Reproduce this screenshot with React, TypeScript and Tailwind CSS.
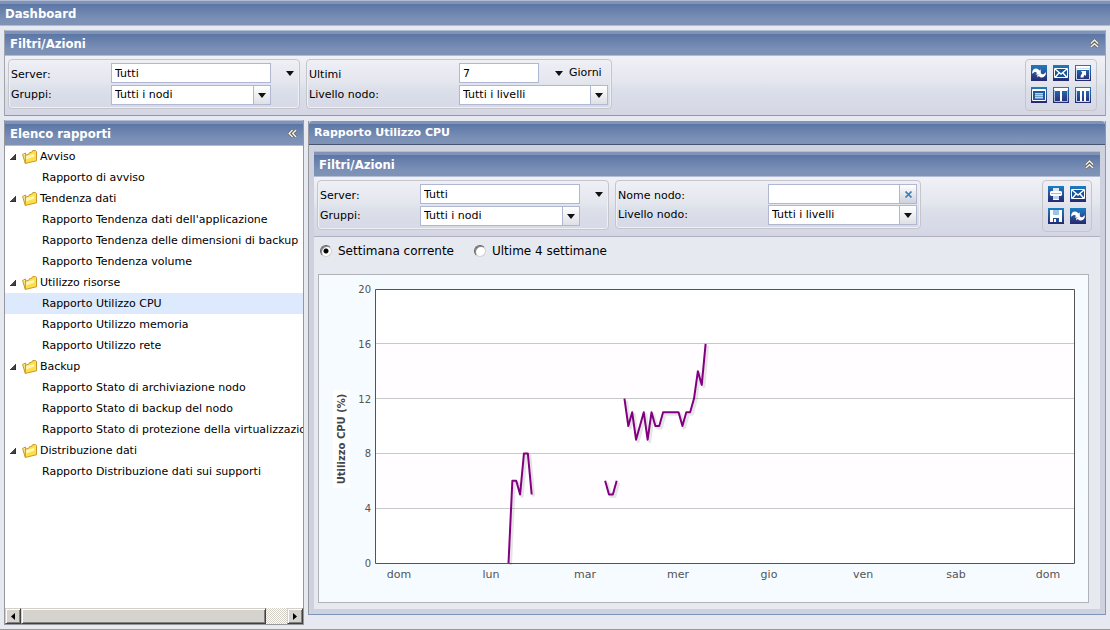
import { useState } from 'react';
import type { ReactNode } from 'react';

const tree = [
  { name: 'Avviso', items: ['Rapporto di avviso'] },
  {
    name: 'Tendenza dati',
    items: [
      "Rapporto Tendenza dati dell'applicazione",
      'Rapporto Tendenza delle dimensioni di backup',
      'Rapporto Tendenza volume',
    ],
  },
  {
    name: 'Utilizzo risorse',
    items: [
      'Rapporto Utilizzo CPU',
      'Rapporto Utilizzo memoria',
      'Rapporto Utilizzo rete',
    ],
  },
  {
    name: 'Backup',
    items: [
      'Rapporto Stato di archiviazione nodo',
      'Rapporto Stato di backup del nodo',
      'Rapporto Stato di protezione della virtualizzazione',
    ],
  },
  {
    name: 'Distribuzione dati',
    items: ['Rapporto Distribuzione dati sui supporti'],
  },
];

// hourly CPU samples, each run starts at the given hour
const runs = [
  { start: 0, values: [0, 6, 6, 5, 8, 8, 5] },
  { start: 25, values: [6, 5, 5, 6] },
  {
    start: 30,
    values: [
      12, 10, 11, 9, 10, 11, 9, 11, 10, 10, 11, 11, 11, 11, 11, 10, 11, 11, 12,
      14, 13, 16,
    ],
  },
];

const days = [
  { x: 80, label: 'dom' },
  { x: 172, label: 'lun' },
  { x: 266, label: 'mar' },
  { x: 359, label: 'mer' },
  { x: 450, label: 'gio' },
  { x: 544, label: 'ven' },
  { x: 637, label: 'sab' },
  { x: 729, label: 'dom' },
];

const yOf = (v: number) => 289 - v * 13.7;

function Chevrons({ className }: { className?: string }) {
  return (
    <svg
      viewBox="0 0 10 10"
      className={`size-[9px] ${className ?? ''}`}
      fill="none"
      aria-hidden="true"
    >
      <path d="M1 5 5 1.2 9 5M1 9 5 5.2 9 9" stroke="#5c5f66" strokeWidth="3" />
      <path d="M1 5 5 1.2 9 5M1 9 5 5.2 9 9" stroke="#f6f3e6" strokeWidth="1.6" />
    </svg>
  );
}

function PanelHeader({
  title,
  children,
}: {
  title: string;
  children?: ReactNode;
}) {
  return (
    <div className="flex h-[26px] shrink-0 items-center justify-between border-y border-[#b0bdd5] bg-[linear-gradient(#8193b7_0,#8193b7_3px,#5b76a5_3px,#7b90b7_75%,#8093b6)] pt-px pr-[6px] pl-[5px]">
      <h2 className="font-['DejaVu_Sans_Condensed','DejaVu_Sans',sans-serif] text-[13px] font-bold text-white">
        {title}
      </h2>
      {children}
    </div>
  );
}

function CollapseButton({ left }: { left?: boolean }) {
  return (
    <button
      type="button"
      aria-label={left ? 'Comprimi elenco' : 'Comprimi filtri'}
      className="flex size-[10px] items-center justify-center"
    >
      <Chevrons className={left ? '-rotate-90' : ''} />
    </button>
  );
}

function Caret() {
  return (
    <svg viewBox="0 0 8 5" className="h-[5px] w-2" aria-hidden="true">
      <path d="M0 0h8L4 5z" fill="#111" />
    </svg>
  );
}

function SelectBox({ id, value }: { id: string; value: string }) {
  return (
    <div className="relative">
      <select
        id={id}
        className="block h-5 w-full appearance-none border border-[#b0b7d3] bg-white pr-5 pl-[3px]"
      >
        <option>{value}</option>
      </select>
      <span className="pointer-events-none absolute inset-y-px right-px flex w-[17px] items-center justify-center border-l border-[#b0b7d3] bg-linear-to-b from-white to-[#dfe0e6]">
        <Caret />
      </span>
    </div>
  );
}

function TextBox({ id, value }: { id: string; value?: string }) {
  return (
    <input
      id={id}
      type="text"
      defaultValue={value}
      className="block h-5 w-full min-w-0 border border-[#b0b7d3] bg-white px-[3px]"
    />
  );
}

function MenuCaret({ label }: { label: string }) {
  return (
    <button
      type="button"
      aria-label={label}
      className="flex h-5 w-2 items-center justify-center"
    >
      <Caret />
    </button>
  );
}

function Group({ children }: { children: ReactNode }) {
  return (
    <div className="rounded border border-[#c6c5ca] p-[3px] pl-[2px] shadow-[inset_0_0_0_1px_#eff0f4]">
      {children}
    </div>
  );
}

function ServerGroup({ prefix }: { prefix: string }) {
  return (
    <Group>
      <div className="grid grid-cols-[100px_160px_25px] gap-y-[2px]">
        <label htmlFor={`${prefix}-server`} className="pt-1">
          Server:
        </label>
        <TextBox id={`${prefix}-server`} value="Tutti" />
        <div className="flex justify-end pr-[2px]">
          <MenuCaret label="Scegli server" />
        </div>
        <label htmlFor={`${prefix}-groups`} className="pt-[2px]">
          Gruppi:
        </label>
        <SelectBox id={`${prefix}-groups`} value="Tutti i nodi" />
      </div>
    </Group>
  );
}

const iconShapes = {
  refresh: (
    <>
      <path
        d="M1 8.800C1 5.500 2.600 3.600 5 3.600c1.600 0 2.600.8 3.300 1.900L9.600 4.300 10 9.800 4.600 9.400 6 8C5.200 7 4.200 6.800 3.300 7.300 2.600 7.700 2.200 8.200 1 8.800z"
        fill="#fff"
      />
      <path
        d="M15 7.200c0 3.300-1.600 5.200-4 5.200-1.600 0-2.600-.6-3.300-1.500L6.500 12.500 6.200 10.300 10.400 8.200 10 8.600c.8.800 1.800.9 2.700.4.700-.4 1.100-1.200 2.300-1.800z"
        fill="#fff"
      />
    </>
  ),
  mail: (
    <>
      <path d="M1.500 3.500h13v9h-13z" fill="#17539a" stroke="#fff" />
      <path
        d="M2 4l6 5 6-5M2 12.500l4-4.500M14 12.500 10 8"
        fill="none"
        stroke="#fff"
        strokeWidth="1.400"
      />
    </>
  ),
  popup: (
    <>
      <path d="M1 1h14v4H1z" fill="#fff" />
      <path d="M1.500 3.500h13v11h-13z" fill="none" stroke="#c8daef" />
      <path
        d="M6 6h5v5L9.700 9.800C8.700 11 8.600 11.500 8.500 12.500H5.500C5.500 10.800 6 9.600 7.300 7.900z"
        fill="#fff"
      />
    </>
  ),
  list: (
    <>
      <path d="M1.500 2.500h13v11h-13z" fill="#1d5ca2" stroke="#fff" />
      <path d="M2 2h12v2H2z" fill="#fff" />
      <path d="M4 6h8v6H4z" fill="#6f9bcd" />
      <path d="M4 6.500h8M4 8.500h8M4 10.500h8" stroke="#bcd3ec" />
    </>
  ),
  twoColumns: (
    <>
      <path d="M1 1h14v3H1z" fill="#fff" />
      <path d="M1.500 3v11.500h13V3" fill="none" stroke="#9fc0e2" />
      <path d="M7 4h2v10H7z" fill="#fff" />
    </>
  ),
  threeColumns: (
    <>
      <path d="M1 1h14v3H1z" fill="#fff" />
      <path d="M1.500 3v11.500h13V3" fill="none" stroke="#c8daef" />
      <path d="M5 4h2v10H5zM9 4h2v10H9z" fill="#fff" />
    </>
  ),
  print: (
    <>
      <path d="M5 2h6v3H5z" fill="#dce8f6" />
      <path d="M3 5h10l1 1v3l-1 1H3L2 9V6z" fill="#fff" />
      <path d="M3 7h10v1H3z" fill="#9dbbe0" />
      <path d="M5 9h6v5H5z" fill="#bcd3ec" />
      <path d="M5 9h6v1H5zM5 13h6v1H5z" fill="#fff" />
    </>
  ),
  save: (
    <>
      <path d="M2 2h12v12H2z" fill="#fff" />
      <path d="M5 2h6v5H5z" fill="#9cc4e6" />
      <path d="M5 10h6v4H5z" fill="#1b4f97" />
      <path d="M6 11h2v3H6z" fill="#fff" />
    </>
  ),
};

type IconName = keyof typeof iconShapes;

function IconButton({ icon, label }: { icon: IconName; label: string }) {
  return (
    <button
      type="button"
      aria-label={label}
      title={label}
      className="size-4 bg-linear-to-b from-[#1a7dc0] to-[#26286f]"
    >
      <svg viewBox="0 0 16 16" className="size-4" aria-hidden="true">
        {iconShapes[icon]}
      </svg>
    </button>
  );
}

function Folder() {
  return (
    <svg viewBox="0 0 15 14" className="h-[14px] w-[15px]" aria-hidden="true">
      <path
        d="M.6 4.500 3.500 3l1 9.500-1.200.9z"
        fill="#fdf0a0"
        stroke="#c8982a"
      />
      <path
        d="M3.300 13.400V5.200l3.200-.8 1-1.700 2.300-.5.800-1.500 3-.2.900 1v9.300z"
        fill="#fbe04a"
        stroke="#c8982a"
      />
      <path d="M4.200 6l8-2v2.500l-8 3z" fill="#fff7b8" />
    </svg>
  );
}

function ReportTree() {
  const [selected, setSelected] = useState('Rapporto Utilizzo CPU');

  return (
    <ul className="min-h-0 flex-1 overflow-hidden">
      {tree.map((group) => (
        <li key={group.name}>
          <button
            type="button"
            className="flex h-[21px] w-full items-center pl-[5px]"
          >
            <svg viewBox="0 0 6 6" className="size-[6px]" aria-hidden="true">
              <path d="M6 0v6H0z" fill="#444" stroke="#111" strokeWidth=".6" />
            </svg>
            <span className="mr-[3px] ml-[6px]">
              <Folder />
            </span>
            {group.name}
          </button>
          <ul>
            {group.items.map((item) => (
              <li key={item}>
                <a
                  href="#"
                  onClick={() => setSelected(item)}
                  className={`block h-[21px] overflow-hidden pl-[37px] leading-[21px] whitespace-nowrap ${
                    item === selected ? 'bg-[#dde9fc]' : ''
                  }`}
                >
                  {item}
                </a>
              </li>
            ))}
          </ul>
        </li>
      ))}
    </ul>
  );
}

const bevel =
  'border border-t-[#d4d0c8] border-r-[#404040] border-b-[#404040] border-l-[#d4d0c8] bg-[#d6d3ce] shadow-[inset_1px_1px_#fff,inset_-1px_-1px_#808080]';

function ScrollBar() {
  return (
    <div className="flex h-4 shrink-0 bg-[repeating-conic-gradient(#d4d0c8_0_25%,#fff_0_50%)] bg-[length:2px_2px]">
      <button
        type="button"
        aria-label="Scorri a sinistra"
        className={`flex w-4 items-center justify-center ${bevel}`}
      >
        <svg viewBox="0 0 4 7" className="h-[7px] w-1" aria-hidden="true">
          <path d="M4 0v7L0 3.500z" />
        </svg>
      </button>
      <div className="flex-1 pr-[21px]">
        <div className={`h-4 ${bevel}`} />
      </div>
      <button
        type="button"
        aria-label="Scorri a destra"
        className={`flex w-4 items-center justify-center ${bevel}`}
      >
        <svg viewBox="0 0 4 7" className="h-[7px] w-1" aria-hidden="true">
          <path d="M0 0v7l4-3.500z" />
        </svg>
      </button>
    </div>
  );
}

function CpuChart() {
  return (
    <svg
      viewBox="0 0 769 327"
      className="block w-full font-['DejaVu_Sans',sans-serif]"
      role="img"
      aria-label="Utilizzo CPU (%)"
    >
      <path d="M14 115h17v98H14z" fill="#fff" />
      <path d="M56.500 14.500h699v274h-699z" fill="#fff" />
      <path d="M57 69h698v54H57zM57 179h698v54H57z" fill="#fffdff" />
      {[4, 8, 12, 16].map((v) => (
        <path
          key={v}
          d={`M57 ${Math.floor(yOf(v)) - 0.5}h698`}
          stroke="#c8c8c8"
        />
      ))}
      <path d="M56.500 14.500h699v274h-699z" fill="none" stroke="#545454" />

      {[0, 4, 8, 12, 16, 20].map((v) => (
        <text
          key={v}
          x="52"
          y={yOf(v) + 3}
          textAnchor="end"
          fontSize="10"
          fill="#545454"
        >
          {v}
        </text>
      ))}
      {days.map((day) => (
        <text
          key={day.x}
          x={day.x}
          y="303"
          textAnchor="middle"
          fontSize="11"
          fill="#545454"
        >
          {day.label}
        </text>
      ))}
      <text
        transform="translate(26 164) rotate(-90)"
        textAnchor="middle"
        fontSize="10"
        fontWeight="bold"
        fill="#454545"
      >
        Utilizzo CPU (%)
      </text>

      {runs.map((run) => {
        const points = run.values
          .map((v, i) => `${189.5 + (run.start + i) * 3.865},${yOf(v) - 1}`)
          .join(' ');
        return (
          <g key={run.start} fill="none" strokeLinejoin="round">
            <polyline
              points={points}
              transform="translate(2 2)"
              stroke="#000"
              strokeOpacity=".1"
              strokeWidth="3"
            />
            <polyline points={points} stroke="#800080" strokeWidth="2" />
          </g>
        );
      })}
    </svg>
  );
}

function PeriodRadio({ label, checked }: { label: string; checked?: boolean }) {
  return (
    <label className="flex items-center gap-[6px]">
      <input
        type="radio"
        name="period"
        defaultChecked={checked}
        className="size-3 appearance-none rounded-full border border-t-[#606060] border-r-[#d4d0c8] border-b-[#d4d0c8] border-l-[#606060] bg-white shadow-[inset_1px_1px_#808080] checked:bg-[radial-gradient(circle,#000_2px,#fff_3px)]"
      />
      {label}
    </label>
  );
}

const filterBody =
  'flex items-start border-b bg-[linear-gradient(#f1f1f7,#e4e6ee_45%,#dbe0ea_55%,#d5d6e5)] px-[3px] pt-[3px] pb-1';

export default function App() {
  return (
    <div className="flex min-h-screen flex-col border-b border-[#999] bg-[#e6e9ef] font-['DejaVu_Sans',sans-serif] text-[11px] leading-[16px] text-black">
      <PanelHeader title="Dashboard" />

      <div className="flex flex-1 flex-col gap-1 px-1 pt-1 pb-[4px]">
        <section className="border-x border-[#a3a5ae]">
          <PanelHeader title="Filtri/Azioni">
            <CollapseButton />
          </PanelHeader>
          <div className={`${filterBody} gap-[6px] border-[#96969c]`}>
            <ServerGroup prefix="main" />
            <Group>
              <div className="grid grid-cols-[150px_80px_69px] gap-y-[2px]">
                <label htmlFor="last" className="pt-1">
                  Ultimi
                </label>
                <TextBox id="last" value="7" />
                <div className="flex items-center gap-[6px] pl-4">
                  <MenuCaret label="Scegli periodo" />
                  Giorni
                </div>
                <label htmlFor="main-level" className="pt-[2px]">
                  Livello nodo:
                </label>
                <div className="col-span-2">
                  <SelectBox id="main-level" value="Tutti i livelli" />
                </div>
              </div>
            </Group>
            <div className="mr-[5px] ml-auto grid grid-cols-3 gap-[6px] rounded border border-[#c6c5ca] p-[5px] pb-[7px]">
              <IconButton icon="refresh" label="Aggiorna" />
              <IconButton icon="mail" label="E-mail" />
              <IconButton icon="popup" label="Apri" />
              <IconButton icon="list" label="Una colonna" />
              <IconButton icon="twoColumns" label="Due colonne" />
              <IconButton icon="threeColumns" label="Tre colonne" />
            </div>
          </div>
        </section>

        <div className="flex flex-1 gap-1">
          <nav className="flex w-[300px] shrink-0 flex-col border-x border-b border-[#96969c] bg-white">
            <PanelHeader title="Elenco rapporti">
              <CollapseButton left />
            </PanelHeader>
            <ReportTree />
            <ScrollBar />
          </nav>

          <main className="mt-px mb-[10px] flex min-w-0 flex-1 flex-col border-x border-b border-x-[#96969c] border-b-[#7c93bd] bg-[#ced2de]">
            <h1 className="flex h-6 items-center rounded-t-sm border-b border-[#47546f] bg-[linear-gradient(#8193b7_0,#8193b7_3px,#5b76a5_3px,#7b90b7_75%,#8093b6)] pt-px pl-[5px] font-bold text-white">
              Rapporto Utilizzo CPU
            </h1>
            <div className="m-[5px] mt-[6px] flex-1 bg-[#e6e9ef]">
              <PanelHeader title="Filtri/Azioni">
                <CollapseButton />
              </PanelHeader>
              <div className={`${filterBody} gap-[6px] border-[#b0b0bf]`}>
                <ServerGroup prefix="report" />
                <Group>
                  <div className="grid grid-cols-[150px_149px] gap-y-px">
                    <label htmlFor="node-name" className="pt-1">
                      Nome nodo:
                    </label>
                    <div className="flex">
                      <TextBox id="node-name" />
                      <button
                        type="button"
                        aria-label="Cancella"
                        className="flex h-5 w-[17px] shrink-0 items-center justify-center border border-l-0 border-[#b0b7d3] bg-linear-to-b from-white to-[#cfd1dc]"
                      >
                        <svg viewBox="0 0 7 7" className="size-[7px]">
                          <path
                            d="M.5.5l6 6M6.500.5l-6 6"
                            stroke="#3f83bd"
                            strokeWidth="1.700"
                          />
                        </svg>
                      </button>
                    </div>
                    <label htmlFor="report-level" className="pt-[2px]">
                      Livello nodo:
                    </label>
                    <SelectBox id="report-level" value="Tutti i livelli" />
                  </div>
                </Group>
                <div className="mr-[5px] ml-auto grid grid-cols-2 gap-[6px] rounded border border-[#c6c5ca] p-[5px] pb-[7px]">
                  <IconButton icon="print" label="Stampa" />
                  <IconButton icon="mail" label="E-mail" />
                  <IconButton icon="save" label="Salva" />
                  <IconButton icon="refresh" label="Aggiorna" />
                </div>
              </div>

              <div className="flex gap-5 px-[6px] pt-[6px] pb-[15px] text-[12px]">
                <PeriodRadio label="Settimana corrente" checked />
                <PeriodRadio label="Ultime 4 settimane" />
              </div>

              <div className="mr-[11px] ml-1 border border-[#b0b3b8] bg-[#f6fbff]">
                <CpuChart />
              </div>
            </div>
          </main>
        </div>
      </div>
    </div>
  );
}
